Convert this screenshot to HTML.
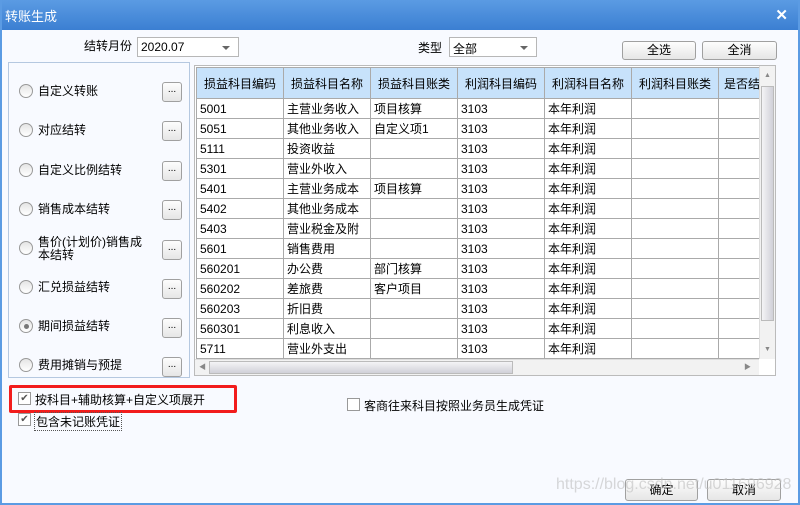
<!DOCTYPE html>
<html><head><meta charset="utf-8"><style>
*{margin:0;padding:0;box-sizing:border-box}
body{width:800px;height:505px;overflow:hidden;background:#f8faff;font-family:"Liberation Sans","Noto Sans CJK SC",sans-serif;font-size:12px;color:#000;position:relative}
.a{position:absolute}
#frame{left:0;top:0;width:800px;height:505px;border:2px solid #5b9be3;border-top:none}
#title{left:0;top:0;width:800px;height:30px;background:linear-gradient(#5b9be3,#3b7fd2);color:#fff;font-size:13px;padding:6px 0 0 5px}
#x{right:12px;top:6px;color:#fff;font-weight:bold;font-size:15px}
.combo{border:1px solid #b7b7b7;background:#fff;height:20px;padding:2px 3px;font-size:12px}
.combo:after{content:"";position:absolute;right:8px;top:8px;border:4px solid transparent;border-top:4px solid #666}
.btn{border:1px solid #a0a0a0;border-radius:3px;background:linear-gradient(#fdfdfd,#e6e6e6);text-align:center;font-size:12px}
#left{left:8px;top:62px;width:182px;height:316px;border:1px solid #b5c8e0}
.rad{left:19px;width:14px;height:14px;border:1px solid #999;border-radius:50%;background:linear-gradient(#e5e5e5,#fff)}
.lab{left:38px;font-size:12px;line-height:13px}
.dot{left:162px;width:20px;height:20px;font-size:10px;line-height:14px}
#tbl{left:194px;top:65px;width:582px;height:311px;border:1px solid #bbb;background:#fff;overflow:hidden}
table{border-collapse:collapse;position:absolute;left:1px;top:1px;table-layout:fixed}
td{border:1px solid #aaa;height:20px;padding:0 3px;white-space:nowrap;overflow:hidden;font-size:12px}
th{background:#c7e2fb;border:1px solid #aaa;height:31px;font-weight:normal;font-size:12px;white-space:nowrap;overflow:hidden}
.cb{width:13px;height:13px;border:1px solid #999;background:#fff;font-size:10px;line-height:11px;text-align:center;color:#555}
</style></head><body>
<div class="a" id="title">转账生成</div><div class="a" id="x">✕</div>
<div class="a" id="frame"></div>
<div class="a" style="left:84px;top:37px">结转月份</div>
<div class="a combo" style="left:137px;top:37px;width:102px">2020.07</div>
<div class="a" style="left:418px;top:39px">类型</div>
<div class="a combo" style="left:449px;top:37px;width:88px">全部</div>
<div class="a btn" style="left:622px;top:41px;width:74px;height:19px;line-height:17px">全选</div>
<div class="a btn" style="left:702px;top:41px;width:75px;height:19px;line-height:17px">全消</div>
<div class="a" id="left"></div>
<div class="a rad" style="top:84px"></div><div class="a lab" style="top:85px">自定义转账</div><div class="a btn dot" style="top:82px">...</div>
<div class="a rad" style="top:123px"></div><div class="a lab" style="top:124px">对应结转</div><div class="a btn dot" style="top:121px">...</div>
<div class="a rad" style="top:163px"></div><div class="a lab" style="top:164px">自定义比例结转</div><div class="a btn dot" style="top:161px">...</div>
<div class="a rad" style="top:202px"></div><div class="a lab" style="top:203px">销售成本结转</div><div class="a btn dot" style="top:200px">...</div>
<div class="a rad" style="top:241px"></div><div class="a lab" style="top:236px">售价(计划价)销售成<br>本结转</div><div class="a btn dot" style="top:240px">...</div>
<div class="a rad" style="top:280px"></div><div class="a lab" style="top:281px">汇兑损益结转</div><div class="a btn dot" style="top:279px">...</div>
<div class="a rad" style="top:319px"></div><div class="a" style="left:24px;top:324px;width:5px;height:5px;border-radius:50%;background:#777"></div><div class="a lab" style="top:320px">期间损益结转</div><div class="a btn dot" style="top:318px">...</div>
<div class="a rad" style="top:358px"></div><div class="a lab" style="top:359px">费用摊销与预提</div><div class="a btn dot" style="top:357px">...</div>
<div class="a" id="tbl">
<table><colgroup><col width="87"><col width="87"><col width="87"><col width="87"><col width="87"><col width="87"><col width="41"></colgroup>
<tr><th>损益科目编码</th><th>损益科目名称</th><th>损益科目账类</th><th>利润科目编码</th><th>利润科目名称</th><th>利润科目账类</th><th style="text-align:left;padding-left:5px">是否结</th></tr>
<tr><td>5001</td><td>主营业务收入</td><td>项目核算</td><td>3103</td><td>本年利润</td><td></td><td></td></tr>
<tr><td>5051</td><td>其他业务收入</td><td>自定义项1</td><td>3103</td><td>本年利润</td><td></td><td></td></tr>
<tr><td>5111</td><td>投资收益</td><td></td><td>3103</td><td>本年利润</td><td></td><td></td></tr>
<tr><td>5301</td><td>营业外收入</td><td></td><td>3103</td><td>本年利润</td><td></td><td></td></tr>
<tr><td>5401</td><td>主营业务成本</td><td>项目核算</td><td>3103</td><td>本年利润</td><td></td><td></td></tr>
<tr><td>5402</td><td>其他业务成本</td><td></td><td>3103</td><td>本年利润</td><td></td><td></td></tr>
<tr><td>5403</td><td>营业税金及附</td><td></td><td>3103</td><td>本年利润</td><td></td><td></td></tr>
<tr><td>5601</td><td>销售费用</td><td></td><td>3103</td><td>本年利润</td><td></td><td></td></tr>
<tr><td>560201</td><td>办公费</td><td>部门核算</td><td>3103</td><td>本年利润</td><td></td><td></td></tr>
<tr><td>560202</td><td>差旅费</td><td>客户项目</td><td>3103</td><td>本年利润</td><td></td><td></td></tr>
<tr><td>560203</td><td>折旧费</td><td></td><td>3103</td><td>本年利润</td><td></td><td></td></tr>
<tr><td>560301</td><td>利息收入</td><td></td><td>3103</td><td>本年利润</td><td></td><td></td></tr>
<tr><td>5711</td><td>营业外支出</td><td></td><td>3103</td><td>本年利润</td><td></td><td></td></tr>
</table>
<div class="a" style="left:564px;top:0;width:17px;height:293px;background:#f2f2f2;border-left:1px solid #ddd"></div>
<div class="a" style="left:566px;top:20px;width:13px;height:235px;background:linear-gradient(90deg,#f4f4f6,#d0d0d8);border:1px solid #bbb"></div>
<div class="a" style="left:569px;top:6px;font-size:7px;color:#888">▲</div>
<div class="a" style="left:569px;top:280px;font-size:7px;color:#888">▼</div>
<div class="a" style="left:0;top:293px;width:564px;height:17px;background:#f2f2f2;border-top:1px solid #ddd"></div>
<div class="a" style="left:14px;top:295px;width:304px;height:13px;background:linear-gradient(#f4f4f6,#d0d0d8);border:1px solid #bbb"></div>
<div class="a" style="left:4px;top:296px;font-size:7px;color:#888">◀</div>
<div class="a" style="left:549px;top:296px;font-size:7px;color:#888">▶</div>
</div>
<div class="a" style="left:9px;top:385px;width:228px;height:28px;border:3px solid #f21c1c;border-radius:2px"></div>
<div class="a cb" style="left:18px;top:392px">✔</div><div class="a" style="left:35px;top:391px">按科目+辅助核算+自定义项展开</div>
<div class="a cb" style="left:18px;top:413px">✔</div><div class="a" style="left:34px;top:412px;border:1px dotted #555;padding:0 1px">包含未记账凭证</div>
<div class="a cb" style="left:347px;top:398px"></div><div class="a" style="left:364px;top:397px">客商往来科目按照业务员生成凭证</div>
<div class="a btn" style="left:625px;top:479px;width:73px;height:22px;line-height:20px">确定</div>
<div class="a btn" style="left:707px;top:479px;width:74px;height:22px;line-height:20px">取消</div>
<div class="a" style="left:556px;top:476px;font-size:16px;color:rgba(190,190,190,0.6)">https://blog.csdn.net/u011696928</div>
</body></html>
